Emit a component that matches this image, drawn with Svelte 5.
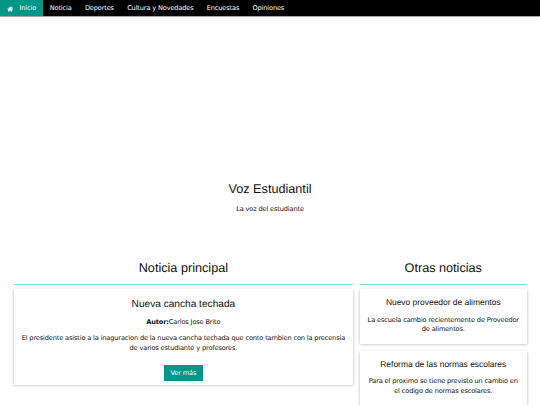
<script lang="ts">
    const links = ["Noticia", "Deportes", "Cultura y Novedades", "Encuestas", "Opiniones"];

    const others = [
        {
            title: "Nuevo proveedor de alimentos",
            text: "La escuela cambio recientemente de Proveedor de alimentos."
        },
        {
            title: "Reforma de las normas escolares",
            text: "Para el proximo se tiene previsto un cambio en el codigo de normas escolares."
        }
    ];
</script>

<div class="page">
    <nav class="bar">
        <a class="item active" href="#inicio">
            <svg class="home" viewBox="0 0 26 24" aria-hidden="true">
                <path d="M13 2 L1 12 L2.5 14 L13 5.3 L23.5 14 L25 12 L21.5 9 V3 H18 V6.2 Z" />
                <path d="M13 6 L4.5 13 V22 H11.3 V17 H14.7 V22 H21.5 V13 Z" />
            </svg>
            Inicio
        </a>
        {#each links as link}
            <a class="item" href="#{link}">{link}</a>
        {/each}
    </nav>

    <header class="hero">
        <h2>Voz Estudiantil</h2>
        <p>La voz del estudiante</p>
    </header>

    <main class="columns">
        <section>
            <h2 class="heading">Noticia principal</h2>
            <article class="card main">
                <h3>Nueva cancha techada</h3>
                <p><b>Autor:</b>Carlos Jose Brito</p>
                <p>El presidente asistio a la inaguracion de la nueva cancha techada que conto tambien con la precensia de varios estudiante y profesores.</p>
                <button>Ver más</button>
            </article>
        </section>
        <section>
            <h2 class="heading">Otras noticias</h2>
            {#each others as { title, text }}
                <article class="card">
                    <h4>{title}</h4>
                    <p>{text}</p>
                </article>
            {/each}
        </section>
    </main>
</div>

<style>
    :global(body) {
        background: #fff;
        overflow: hidden;
    }

    .page {
        height: 405px;
        overflow: hidden;
        font-family: "DejaVu Sans", sans-serif;
        font-size: 6.6px;
        letter-spacing: -0.14px;
        line-height: 9.5px;
        color: #111;
        text-align: center;
        text-rendering: geometricPrecision;
    }

    .bar {
        display: flex;
        height: 16.25px;
        background: #000;
        box-shadow: 0 0.6px 0.6px rgba(0, 0, 0, 0.35);
    }

    .item {
        display: flex;
        align-items: center;
        padding: 1.2px 6.4px 0 6.85px;
        color: #fff;
        text-decoration: none;
        white-space: nowrap;
    }

    .active {
        padding-right: 6.75px;
        background: #009688;
    }

    .home {
        width: 6.4px;
        height: 6px;
        margin-right: 6.3px;
        fill: #fff;
    }

    h2,
    h3,
    h4 {
        margin: 0;
        font-family: "Liberation Sans", sans-serif;
        font-weight: 400;
        letter-spacing: 0;
        line-height: 1.5;
    }

    h2 {
        font-size: 12.66px;
    }

    h3 {
        font-size: 10.13px;
    }

    h4 {
        font-size: 8.44px;
    }

    p {
        margin: 6.33px 0 0;
    }

    .hero {
        height: 241.5px;
        padding-top: 163.4px;
        box-sizing: border-box;
    }

    .columns {
        display: grid;
        grid-template-columns: 339.75px 166.5px;
        column-gap: 6.75px;
        padding: 0 13.5px;
    }

    .heading {
        height: 26.9px;
        margin-bottom: 4.2px;
        padding-top: 0.9px;
        box-sizing: border-box;
        border-bottom: 1px solid #88cfd0;
    }

    .card {
        height: 55.4px;
        margin-bottom: 6.33px;
        padding: 7.4px 6.75px 0;
        box-sizing: border-box;
        background: #fff;
        box-shadow: 0 0.85px 2.1px rgba(0, 0, 0, 0.2), 0 0.85px 4.2px rgba(0, 0, 0, 0.14);
    }

    .card p {
        margin-top: 6.9px;
    }

    .main {
        height: 96.3px;
        padding-top: 7.8px;
    }

    .main p {
        margin-top: 6.4px;
    }

    button {
        height: 16.25px;
        margin-top: 11.8px;
        padding: 0.6px 6.75px 0;
        border: 0;
        background: #009688;
        color: #fff;
        font: inherit;
        letter-spacing: inherit;
    }
</style>
